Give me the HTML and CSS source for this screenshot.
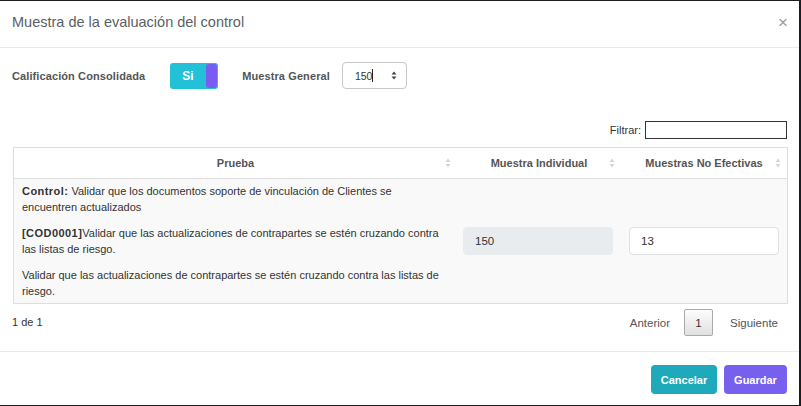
FILE: index.html
```html
<!DOCTYPE html>
<html lang="es">
<head>
<meta charset="utf-8">
<title>Muestra de la evaluación del control</title>
<link rel="stylesheet" href="styles.css">
</head>
<body>
<div class="modal">
  <div class="modal-header">
    <h4 class="modal-title">Muestra de la evaluación del control</h4>
    <span class="close">×</span>
  </div>
  <div class="modal-body">
    <div class="form-row">
      <label class="lbl">Calificación Consolidada</label>
      <div class="toggle"><span class="toggle-text">Si</span><span class="knob"></span></div>
      <label class="lbl lbl-2">Muestra General</label>
      <div class="num-input"><span class="num-val">150</span><span class="caret"></span>
        <svg class="spin" width="6" height="9" viewBox="0 0 6 9"><path d="M3 0.5L5.5 3.5H0.5Z M3 8.5L5.5 5.5H0.5Z" fill="#444"/></svg>
      </div>
    </div>
    <div class="filter-row">
      <label class="filter-lbl">Filtrar:</label>
      <input class="filter-input" type="text">
    </div>
    <table class="grid">
      <thead>
        <tr>
          <th class="c1">Prueba<svg class="sort" width="6" height="10" viewBox="0 0 6 10"><path d="M3 0.5L5.5 4H0.5Z M3 9.5L5.5 6H0.5Z" fill="#d6d6d6"/></svg></th>
          <th class="c2">Muestra Individual<svg class="sort" width="6" height="10" viewBox="0 0 6 10"><path d="M3 0.5L5.5 4H0.5Z M3 9.5L5.5 6H0.5Z" fill="#d6d6d6"/></svg></th>
          <th class="c3">Muestras No Efectivas<svg class="sort" width="6" height="10" viewBox="0 0 6 10"><path d="M3 0.5L5.5 4H0.5Z M3 9.5L5.5 6H0.5Z" fill="#d6d6d6"/></svg></th>
        </tr>
      </thead>
      <tbody>
        <tr>
          <td class="txt">
            <p><b>Control:</b> Validar que los documentos soporte de vinculación de Clientes se encuentren actualizados</p>
            <p><b>[COD0001]</b>Validar que las actualizaciones de contrapartes se estén cruzando contra las listas de riesgo.</p>
            <p>Validar que las actualizaciones de contrapartes se estén cruzando contra las listas de riesgo.</p>
          </td>
          <td class="mid"><input class="field field-dis" type="text" value="150" disabled></td>
          <td class="mid"><input class="field" type="text" value="13"></td>
        </tr>
      </tbody>
    </table>
    <div class="pager-row">
      <span class="info">1 de 1</span>
      <div class="pager">
        <span class="pg-link">Anterior</span>
        <span class="pg-btn">1</span>
        <span class="pg-link">Siguiente</span>
      </div>
    </div>
  </div>
  <div class="modal-footer">
    <button class="btn btn-cancel">Cancelar</button>
    <button class="btn btn-save">Guardar</button>
  </div>
</div>
</body>
</html>
```
FILE: styles.css
```css
html, body {
  margin: 0;
  padding: 0;
}
body {
  background: #1b1d21;
  font-family: "Liberation Sans", Arial, sans-serif;
  width: 801px;
  height: 406px;
  overflow: hidden;
}
.modal {
  margin-top: 1px;
  width: 799px;
  height: 404px;
  background: #fff;
  color: #333;
  display: flex;
  flex-direction: column;
}
.modal-header {
  height: 46px;
  border-bottom: 1px solid #e5eaef;
  display: flex;
  align-items: center;
  justify-content: space-between;
  padding: 0 12px;
}
.modal-title {
  margin: 0;
  font-size: 14.5px;
  font-weight: normal;
  color: #5a5f64;
  position: relative;
  top: -2px;
}
.close {
  font-size: 17px;
  color: #9a9a9a;
  position: relative;
  top: -1px;
  right: -1px;
}
.modal-body {
  padding: 14px 12px 0 12px;
  flex: 1;
}
.form-row {
  display: flex;
  align-items: center;
  height: 27px;
}
.lbl {
  font-size: 11px;
  font-weight: bold;
  color: #555;
  letter-spacing: 0.1px;
}
.lbl-2 {
  margin-left: 24px;
}
.toggle {
  margin-left: 25px;
  width: 48px;
  height: 26px;
  background: #22c1d7;
  border-radius: 3px;
  display: flex;
  align-items: center;
  justify-content: space-between;
  box-sizing: border-box;
  padding: 1px;
}
.toggle-text {
  color: #fff;
  font-weight: bold;
  font-size: 12px;
  margin-left: 11px;
}
.knob {
  width: 11px;
  height: 24px;
  background: #7a5cf0;
  border-radius: 3px;
}
.num-input {
  margin-left: 12px;
  width: 65px;
  height: 27px;
  box-sizing: border-box;
  border: 1px solid #c8c8c8;
  border-radius: 4px;
  display: flex;
  align-items: center;
  padding-left: 12px;
  font-size: 10.5px;
  color: #333;
}
.caret {
  width: 1px;
  height: 13px;
  background: #222;
}
.spin {
  margin-left: 18px;
}
.filter-row {
  display: flex;
  justify-content: flex-end;
  align-items: center;
  margin-top: 32px;
  height: 18px;
}
.filter-lbl {
  font-size: 11px;
  color: #333;
  margin-right: 4px;
}
.filter-input {
  width: 142px;
  height: 18px;
  box-sizing: border-box;
  border: 1px solid #333;
  margin: 0;
  padding: 0 3px;
}
.grid {
  margin-top: 8px;
  margin-left: 1px;
  width: 775px;
  border-collapse: collapse;
  border: 1px solid #dedede;
  font-size: 11px;
}
.grid th {
  height: 30px;
  padding: 0 8px;
  font-weight: bold;
  color: #555;
  border-bottom: 1px solid #dedede;
  position: relative;
  text-align: center;
}
.grid th.c1 { width: 428px; }
.grid th.c2 { width: 148px; }
.sort {
  position: absolute;
  right: 6px;
  top: 10px;
}
.grid tbody tr {
  background: #f9f9f9;
}
.grid td {
  padding: 4px 8px 4px 8px;
  color: #333;
}
.grid td.txt {
  padding-right: 10px;
}
.grid td.txt b {
  letter-spacing: 0.45px;
}
.grid td.txt p {
  margin: 0 0 10px 0;
  line-height: 16px;
}
.grid td.txt p:last-child {
  margin-bottom: 0;
}
.grid td.mid {
  vertical-align: middle;
}
.field {
  width: 150px;
  height: 28px;
  box-sizing: border-box;
  border: 1px solid #dde1e4;
  border-radius: 4px;
  padding: 0 11px;
  font-family: "Liberation Sans", Arial, sans-serif;
  font-size: 11.5px;
  color: #333;
  background: #fff;
  margin: 0;
}
.field-dis {
  background: #e9ecef;
  border-color: #e9ecef;
  color: #333;
  margin-left: -2px;
}
.pager-row {
  display: flex;
  justify-content: space-between;
  align-items: center;
  height: 27px;
  margin-top: 5px;
}
.info {
  font-size: 11px;
  color: #333;
  position: relative;
  top: -1px;
}
.pager {
  display: flex;
  align-items: center;
  margin-right: 1px;
}
.pg-link {
  font-size: 11.5px;
  color: #555;
  padding: 0 8px;
}
.pg-btn {
  width: 29px;
  height: 27px;
  box-sizing: border-box;
  border: 1px solid #a9a9a9;
  border-radius: 2px;
  background: linear-gradient(#fdfdfd, #e0e0e0);
  display: flex;
  align-items: center;
  justify-content: center;
  font-size: 11.5px;
  color: #333;
  margin: 0 9px 0 6px;
}
.modal-footer {
  border-top: 1px solid #e5eaef;
  height: 54px;
  display: flex;
  justify-content: flex-end;
  align-items: flex-start;
  padding: 13px 12px 0 0;
  box-sizing: border-box;
  gap: 7px;
}
.btn {
  height: 29px;
  border: none;
  border-radius: 4px;
  color: #fff;
  font-family: "Liberation Sans", Arial, sans-serif;
  font-size: 11px;
  font-weight: bold;
  padding: 0 6px;
}
.btn-cancel {
  background: #1eaabb;
  width: 66px;
}
.btn-save {
  background: #7860ee;
  width: 63px;
}
```
